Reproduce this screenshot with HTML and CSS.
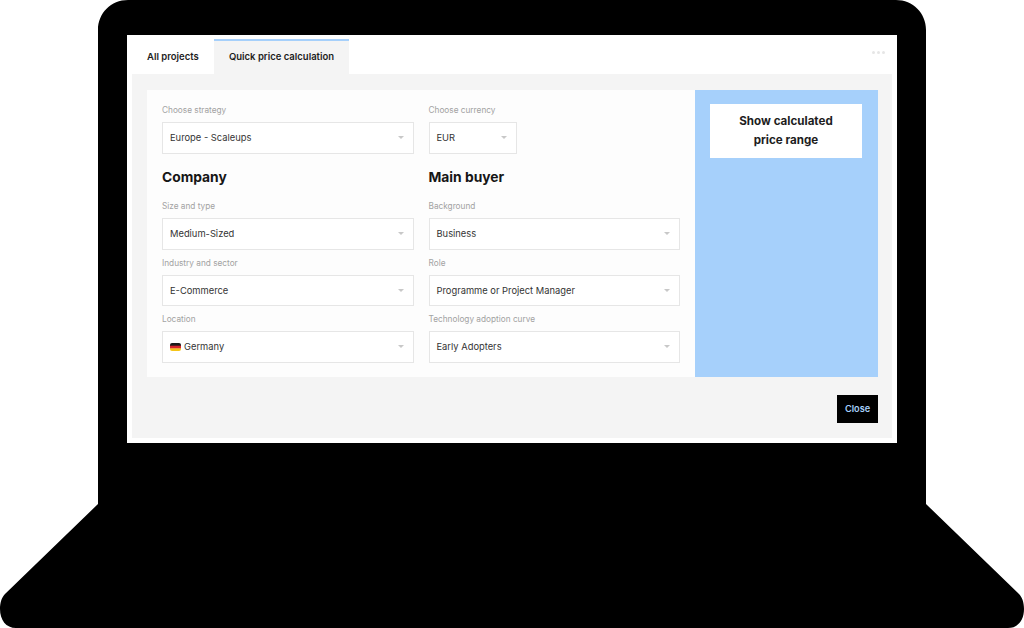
FILE: index.html
```html
<!DOCTYPE html>
<html lang="en">
  <head>
    <meta charset="UTF-8" />
    <meta name="viewport" content="width=device-width, initial-scale=1.0" />
    <title>Quick price calculation</title>
    <link rel="stylesheet" href="styles.css">
  </head>
  <body>
    <div class="stage">
      <svg class="laptop" width="1024" height="628" viewBox="0 0 1024 628">
        <path d="M128 0H896C913 0 926 13 926 30V504L1019 594C1022 597 1024 602 1024 609C1024 620 1018 628 1008 628H16C6 628 0 620 0 609C0 602 2 597 5 594L98 504V30C98 13 111 0 128 0Z" />
      </svg>

      <div class="screen">
        <div class="tabs">
          <div class="tab">All projects</div>
          <div class="tab tab-active">Quick price calculation</div>
          <div class="dots"><span></span><span></span><span></span></div>
        </div>

        <div class="panel">
          <div class="content">
            <div class="form">
              <div class="column">
                <div class="field">
                  <div class="label">Choose strategy</div>
                  <div class="select"><span>Europe - Scaleups</span><i class="caret"></i></div>
                </div>
                <h2>Company</h2>
                <div class="field">
                  <div class="label">Size and type</div>
                  <div class="select"><span>Medium-Sized</span><i class="caret"></i></div>
                </div>
                <div class="field">
                  <div class="label">Industry and sector</div>
                  <div class="select"><span>E-Commerce</span><i class="caret"></i></div>
                </div>
                <div class="field">
                  <div class="label">Location</div>
                  <div class="select">
                    <span class="with-flag">
                      <svg class="flag" width="11" height="8" viewBox="0 0 11 8">
                        <rect width="11" height="3" y="0" fill="#1b1b1b" />
                        <rect width="11" height="3" y="2.7" fill="#d8262c" />
                        <rect width="11" height="2.6" y="5.4" fill="#f5c518" />
                      </svg>
                      Germany
                    </span>
                    <i class="caret"></i>
                  </div>
                </div>
              </div>

              <div class="column">
                <div class="field">
                  <div class="label">Choose currency</div>
                  <div class="select select-small"><span>EUR</span><i class="caret"></i></div>
                </div>
                <h2>Main buyer</h2>
                <div class="field">
                  <div class="label">Background</div>
                  <div class="select"><span>Business</span><i class="caret"></i></div>
                </div>
                <div class="field">
                  <div class="label">Role</div>
                  <div class="select"><span>Programme or Project Manager</span><i class="caret"></i></div>
                </div>
                <div class="field">
                  <div class="label">Technology adoption curve</div>
                  <div class="select"><span>Early Adopters</span><i class="caret"></i></div>
                </div>
              </div>
            </div>

            <div class="side">
              <div class="show-button">Show calculated<br />price range</div>
            </div>
          </div>

          <div class="footer">
            <div class="close-button">Close</div>
          </div>
        </div>
      </div>
    </div>
  </body>
</html>
```

FILE: styles.css
```css
html, body {
  margin: 0;
  padding: 0;
  background: white;
  overflow: hidden;
}
body {
  font-family: Inter, Arial, sans-serif;
  color: #222;
}
.stage {
  position: relative;
  width: 1024px;
  height: 628px;
  padding: 35px 127px 0;
  box-sizing: border-box;
}
.laptop {
  position: absolute;
  left: 0;
  top: 0;
  fill: black;
}
.screen {
  position: relative;
  width: 770px;
  height: 408px;
  background: white;
  padding: 0 5px 5px;
  box-sizing: border-box;
  display: flex;
  flex-direction: column;
}
.tabs {
  height: 39px;
  display: flex;
  flex: none;
  box-sizing: border-box;
  padding-top: 4px;
}
.tab {
  width: 82px;
  padding-left: 15px;
  box-sizing: border-box;
  font-size: 9.5px;
  font-weight: 600;
  line-height: 36px;
  color: #1d1d1d;
}
.tab-active {
  width: 135px;
  padding: 0;
  text-align: center;
  background: #f4f4f4;
  border-top: 2px solid #a6d0fb;
  line-height: 31px;
}
.dots {
  margin-left: auto;
  display: flex;
  gap: 2px;
  padding: 12px 7px 0 0;
}
.dots span {
  width: 3px;
  height: 3px;
  border-radius: 50%;
  background: #e6e6e6;
}
.panel {
  flex: 1;
  background: #f4f4f4;
  padding: 16px 14px 0 15px;
}
.content {
  display: flex;
  height: 287px;
}
.form {
  width: 548px;
  flex: none;
  background: #fdfdfd;
  padding: 12px 15px 0;
  box-sizing: border-box;
  display: flex;
  gap: 15px;
}
.column {
  flex: 1;
}
.field {
  margin-bottom: 5px;
}
.label {
  font-size: 8.25px;
  line-height: 16px;
  color: #a2a2a2;
  margin-bottom: 4px;
}
.select {
  height: 31.5px;
  border: 1px solid #e6e6e6;
  background: white;
  box-sizing: border-box;
  padding: 0 9px 0 7px;
  display: flex;
  align-items: center;
  justify-content: space-between;
  font-size: 9.35px;
  color: #333;
}
.select-small {
  width: 88px;
}
.with-flag {
  display: flex;
  align-items: center;
  gap: 3px;
}
.flag {
  border-radius: 2px;
}
.caret {
  width: 0;
  height: 0;
  border-left: 3px solid transparent;
  border-right: 3px solid transparent;
  border-top: 3px solid #c8c8c8;
}
h2 {
  margin: 13.5px 0 11px;
  font-size: 13.8px;
  line-height: 20px;
  font-weight: 700;
  color: #161616;
}
.side {
  flex: 1;
  background: #a6d0fb;
  padding: 14px 15px;
  box-sizing: border-box;
}
.show-button {
  height: 54px;
  width: 152px;
  background: white;
  text-align: center;
  font-size: 11.6px;
  font-weight: 700;
  line-height: 19px;
  padding-top: 8px;
  box-sizing: border-box;
  color: #1d1d1d;
}
.footer {
  display: flex;
  justify-content: flex-end;
  padding-top: 18px;
}
.close-button {
  width: 41px;
  height: 28px;
  background: black;
  color: #a6d0fb;
  font-size: 9.2px;
  font-weight: 600;
  line-height: 28px;
  text-align: center;
}
```
